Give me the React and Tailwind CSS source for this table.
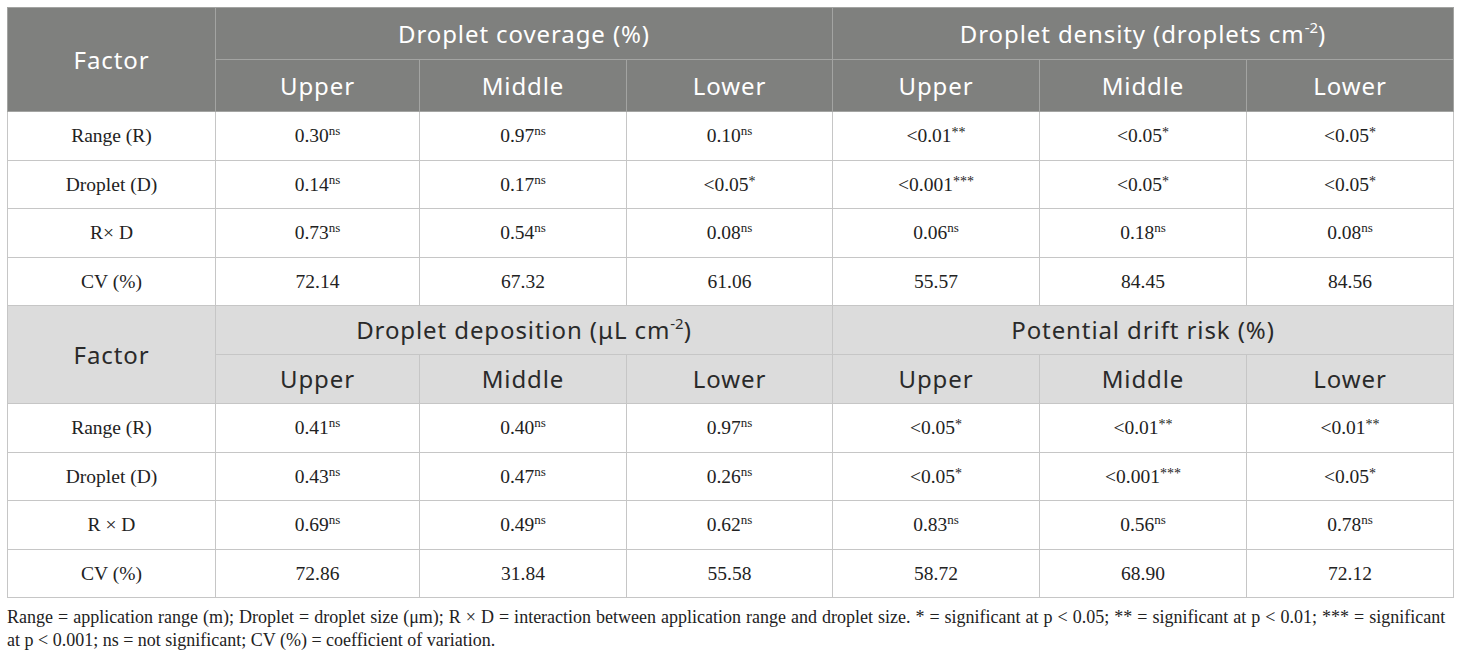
import React from 'react';

const top = {
  title1: 'Droplet coverage (%)',
  title2: (
    <>
      Droplet density (droplets cm<sup className="text-[15px] relative -top-[10px] tracking-normal">-2</sup>)
    </>
  ),
  rows: [
    ['Range (R)', ['0.30', 'ns'], ['0.97', 'ns'], ['0.10', 'ns'], ['<0.01', '**'], ['<0.05', '*'], ['<0.05', '*']],
    ['Droplet (D)', ['0.14', 'ns'], ['0.17', 'ns'], ['<0.05', '*'], ['<0.001', '***'], ['<0.05', '*'], ['<0.05', '*']],
    ['R× D', ['0.73', 'ns'], ['0.54', 'ns'], ['0.08', 'ns'], ['0.06', 'ns'], ['0.18', 'ns'], ['0.08', 'ns']],
    ['CV (%)', ['72.14'], ['67.32'], ['61.06'], ['55.57'], ['84.45'], ['84.56']],
  ],
};

const bottom = {
  title1: (
    <>
      Droplet deposition (μL cm<sup className="text-[15px] relative -top-[10px] tracking-normal">-2</sup>)
    </>
  ),
  title2: 'Potential drift risk (%)',
  rows: [
    ['Range (R)', ['0.41', 'ns'], ['0.40', 'ns'], ['0.97', 'ns'], ['<0.05', '*'], ['<0.01', '**'], ['<0.01', '**']],
    ['Droplet (D)', ['0.43', 'ns'], ['0.47', 'ns'], ['0.26', 'ns'], ['<0.05', '*'], ['<0.001', '***'], ['<0.05', '*']],
    ['R × D', ['0.69', 'ns'], ['0.49', 'ns'], ['0.62', 'ns'], ['0.83', 'ns'], ['0.56', 'ns'], ['0.78', 'ns']],
    ['CV (%)', ['72.86'], ['31.84'], ['55.58'], ['58.72'], ['68.90'], ['72.12']],
  ],
};

const sans = "font-['Noto_Sans',sans-serif]";
const serif = "font-['Liberation_Serif',serif]";

const Value = ({ v }) => (
  <>
    {v[0]}
    {v[1] && (
      <sup className={v[1] === 'ns' ? 'text-[13px] relative -top-[7px]' : 'text-[14px] relative -top-[5px]'}>
        {v[1]}
      </sup>
    )}
  </>
);

const HeaderBlock = ({ data, dark }) => {
  const cell = dark
    ? 'border border-[#a3a4a2] bg-[#7f807e] text-white'
    : 'border border-[#c6c6c6] bg-[#dcdcdc] text-[#2a2a2a]';
  const h = dark ? 'h-[52px]' : 'h-[49px]';
  const txt = 'font-normal text-[24px] tracking-[0.9px]';
  return (
    <>
      <tr className={h}>
        <th rowSpan={2} className={`${cell} ${txt}`}>Factor</th>
        <th colSpan={3} className={`${cell} ${txt}`}>{data.title1}</th>
        <th colSpan={3} className={`${cell} ${txt}`}>{data.title2}</th>
      </tr>
      <tr className={h}>
        {['Upper', 'Middle', 'Lower', 'Upper', 'Middle', 'Lower'].map((t, i) => (
          <th key={i} className={`${cell} ${txt}`}>{t}</th>
        ))}
      </tr>
    </>
  );
};

const BodyRows = ({ data }) =>
  data.rows.map((r, i) => (
    <tr key={i} className={`h-[48.5px] ${serif} text-[19.5px] text-[#222]`}>
      <td className="border border-[#c6c6c6] text-center">{r[0]}</td>
      {r.slice(1).map((v, j) => (
        <td key={j} className="border border-[#c6c6c6] text-center">
          <Value v={v} />
        </td>
      ))}
    </tr>
  ));

export default function App() {
  return (
    <div className="w-[1460px] h-[659px] bg-white pt-[7px] px-[7px]">
      <table className={`w-[1446px] border-collapse table-fixed ${sans}`}>
        <colgroup>
          <col className="w-[208px]" />
          <col className="w-[204px]" />
          <col className="w-[207px]" />
          <col className="w-[206px]" />
          <col className="w-[207px]" />
          <col className="w-[207px]" />
          <col className="w-[207px]" />
        </colgroup>
        <tbody>
          <HeaderBlock data={top} dark />
          <BodyRows data={top} />
          <HeaderBlock data={bottom} />
          <BodyRows data={bottom} />
        </tbody>
      </table>
      <p className={`${serif} text-[18px] leading-[23px] text-[#222] mt-[8px]`}>
        <span className="whitespace-nowrap [word-spacing:0.5px]">
          Range = application range (m); Droplet = droplet size (μm); R × D = interaction between application range and droplet size. * = significant at p &lt; 0.05; ** = significant at p &lt; 0.01; *** = significant
        </span>
        <br />
        at p &lt; 0.001; ns = not significant; CV (%) = coefficient of variation.
      </p>
    </div>
  );
}
